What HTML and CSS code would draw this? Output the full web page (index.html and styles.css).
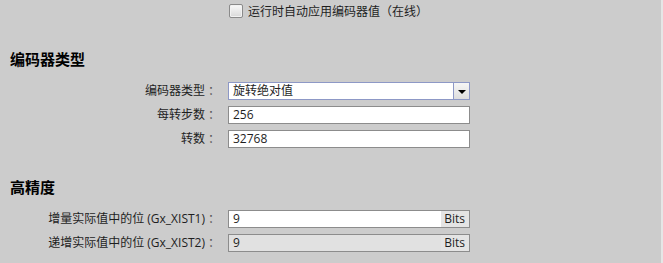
FILE: index.html
```html
<!DOCTYPE html>
<html lang="zh-CN">
<head>
    <meta charset="UTF-8">
    <meta name="viewport" content="width=device-width, initial-scale=1.0">
    <title>编码器</title>
    <link rel="stylesheet" href="styles.css">
</head>
<body>
    <div class="panel">
        <!-- Online option -->
        <label class="top-option">
            <span class="checkbox"></span>
            <span>运行时自动应用编码器值（在线）</span>
        </label>

        <!-- Encoder type -->
        <h2 class="section-title first">编码器类型</h2>
        <div class="form">
            <span class="label">编码器类型<span class="colon">：</span></span>
            <div class="select">
                <span class="value">旋转绝对值</span>
                <span class="arrow"></span>
            </div>

            <span class="label">每转步数<span class="colon">：</span></span>
            <div class="field"><span class="value">256</span></div>

            <span class="label">转数<span class="colon">：</span></span>
            <div class="field"><span class="value">32768</span></div>
        </div>

        <!-- High precision -->
        <h2 class="section-title">高精度</h2>
        <div class="form">
            <span class="label">增量实际值中的位 (Gx_XIST1)<span class="colon">：</span></span>
            <div class="field">
                <span class="value">9</span>
                <span class="unit">Bits</span>
            </div>

            <span class="label">递增实际值中的位 (Gx_XIST2)<span class="colon">：</span></span>
            <div class="field disabled">
                <span class="value">9</span>
                <span class="unit">Bits</span>
            </div>
        </div>
    </div>
</body>
</html>
```

FILE: styles.css
```css
body {
    margin: 0;
    background-color: #e6e6e6;
    font-family: "Open Sans", "Noto Sans CJK SC", sans-serif;
    font-size: 12px;
    color: #1e1e1e;
}
.panel {
    width: 661px;
    height: 263px;
    background-color: #cccccc;
    overflow: hidden;
}
.top-option {
    display: flex;
    align-items: center;
    gap: 5px;
    height: 15px;
    padding: 3px 0 3px 229px;
}
.checkbox {
    width: 12px;
    height: 12px;
    border: 1px solid #8a8a8a;
    border-radius: 2px;
    background: linear-gradient(#fafafa, #d9d9d9);
    box-shadow: inset 0 0 0 1px #f2f2f2;
}
.section-title {
    margin: 29px 0 13px;
    padding-left: 10px;
    font-size: 15px;
    line-height: 20px;
    font-weight: bold;
    color: #000;
}
.section-title.first {
    margin-top: 28px;
}
.form {
    display: grid;
    grid-template-columns: 217px 242px;
    column-gap: 11px;
    row-gap: 6px;
    align-items: center;
}
.label {
    text-align: right;
    line-height: 18px;
}
.colon {
    margin: 0 -3px 0 3px;
    color: #555;
}
.field,
.select {
    display: flex;
    height: 18px;
    box-sizing: border-box;
    border: 1px solid #8c8c8c;
    background-color: #fff;
    line-height: 16px;
}
.value {
    flex: 1;
    padding-left: 4px;
}
.unit {
    padding: 0 4px 0 3px;
    background-color: #e4e4e4;
}
.field.disabled {
    background-color: #e1e1e1;
}
.select {
    border-color: #8d98c6;
}
.select .arrow {
    width: 15px;
    border-left: 1px solid #8d98c6;
    background: linear-gradient(#f6f6f6, #dedede);
    display: flex;
    align-items: center;
    justify-content: center;
}
.select .arrow::before {
    content: "";
    border-left: 4px solid transparent;
    border-right: 4px solid transparent;
    border-top: 4px solid #000;
    margin-top: 1px;
}
```
